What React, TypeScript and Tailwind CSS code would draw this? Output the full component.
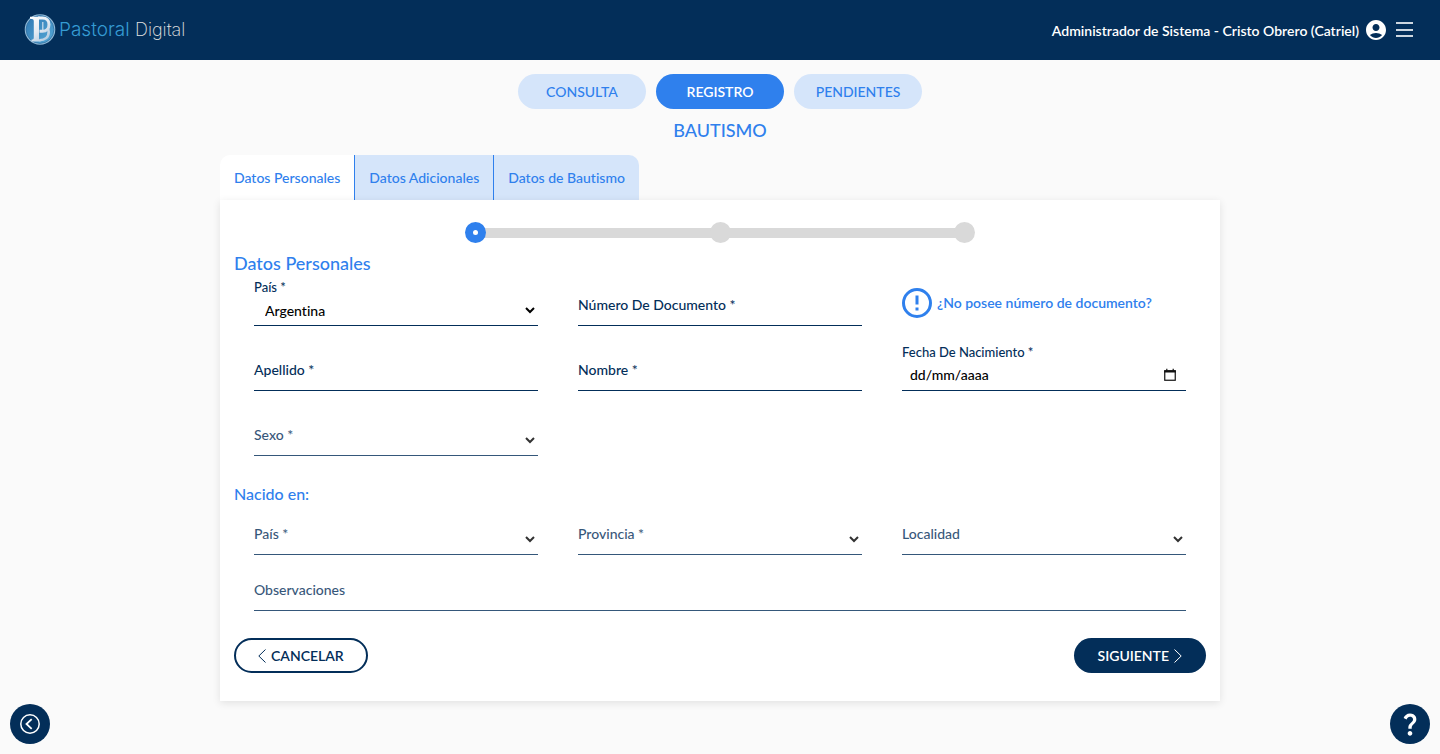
import React, { useState } from 'react';
import type { ReactNode } from 'react';
import { MdAccountCircle, MdQuestionMark } from 'react-icons/md';
import clsx from 'clsx';

const sections = ['CONSULTA', 'REGISTRO', 'PENDIENTES'];
const steps = ['Datos Personales', 'Datos Adicionales', 'Datos de Bautismo'];

interface FieldProps {
  id: string;
  label: string;
  floated?: boolean;
  faded?: boolean;
  className?: string;
  children: ReactNode;
}

const Field = ({ id, label, floated, faded, className, children }: FieldProps) => (
  <div className={clsx('relative h-[49px] border-b border-[#032e59] pt-5', faded && 'opacity-80', className)}>
    <label
      htmlFor={id}
      className={clsx(
        'pointer-events-none absolute left-0 leading-5 font-medium text-[#032e59]',
        floated ? 'top-0 text-[13px]' : 'top-[18px] text-sm'
      )}
    >
      {label}
    </label>
    {children}
  </div>
);

interface ControlProps {
  id: string;
  label: string;
  faded?: boolean;
  className?: string;
}

const TextField = ({ id, label, faded, className }: ControlProps) => {
  const [value, setValue] = useState('');

  return (
    <Field id={id} label={label} floated={value !== ''} faded={faded} className={className}>
      <input
        id={id}
        type="text"
        value={value}
        onChange={(e) => setValue(e.target.value)}
        className="h-[26px] w-full bg-transparent px-2 text-sm font-medium text-black outline-none"
      />
    </Field>
  );
};

const SelectField = ({ id, label, options, initial = '' }: ControlProps & { options: string[]; initial?: string }) => {
  const [value, setValue] = useState(initial);

  return (
    <Field id={id} label={label} floated={value !== ''} faded={value === ''}>
      <select
        id={id}
        value={value}
        onChange={(e) => setValue(e.target.value)}
        className="block h-[26px] w-full bg-transparent pl-[7px] text-sm font-medium text-black outline-none"
      >
        <option value="" />
        {options.map((option) => (
          <option key={option} value={option}>
            {option}
          </option>
        ))}
      </select>
    </Field>
  );
};

const DateField = ({ id, label }: ControlProps) => (
  <Field id={id} label={label} floated>
    <div className="flex h-[26px] items-center pr-[9px] pl-2">
      <input
        id={id}
        type="text"
        placeholder="dd/mm/aaaa"
        className="min-w-0 flex-1 bg-transparent text-sm font-medium text-black outline-none placeholder:text-black"
      />
      <button type="button" aria-label="Abrir calendario">
        <svg width="14" height="14" viewBox="0 0 14 14" fill="none" stroke="#111" className="block">
          <rect x="1.75" y="2.75" width="10.5" height="9.5" strokeWidth="1.2" />
          <path d="M1.2 3.500h11.6" strokeWidth="2" />
          <path d="M3.8.8v2M10.2.8v2" strokeWidth="1.2" />
        </svg>
      </button>
    </div>
  </Field>
);

const Logo = () => (
  <svg width="164" height="34" viewBox="0 0 164 34" role="img" aria-label="Pastoral Digital" className="block">
    <defs>
      <linearGradient id="disc" x1="0" y1="0" x2="1" y2="1">
        <stop offset="0" stopColor="#2f78b4" />
        <stop offset="1" stopColor="#56a9d6" />
      </linearGradient>
      <linearGradient id="letter" gradientUnits="userSpaceOnUse" x1="6" y1="4" x2="26" y2="28">
        <stop offset="0" stopColor="#ffffff" />
        <stop offset="0.5" stopColor="#e3eaf2" />
        <stop offset="1" stopColor="#a9c4dc" />
      </linearGradient>
    </defs>
    <circle cx="16" cy="16.5" r="15.3" fill="#8fb8d6" />
    <circle cx="16" cy="16.5" r="13.9" fill="url(#disc)" stroke="#2b6a9e" strokeWidth="0.7" />
    <path
      d="M6 3.800h10v2h-1V25.500c0 .8.500 1.200 1.500 1.200v1.800H7.500v-1.800c1.700 0 2.300-.7 2.300-2.200V8.200c0-1.700-1-2.400-3.800-2.400z"
      fill="url(#letter)"
    />
    <path
      d="M14 5h4.500c4.200 0 6.500 2.700 6.500 6.400s-2.300 6.900-6.500 6.900h-3"
      fill="none"
      stroke="url(#letter)"
      strokeWidth="3"
    />
    <path d="M15.500 27.300c5.500 0 9.200-3 9.200-8.300c0-1.800-.4-3.200-1.200-4.300" fill="none" stroke="url(#letter)" strokeWidth="2.600" />
    <path d="M18.800 9v8" fill="none" stroke="#cfe0ee" strokeWidth="1.200" />
    <text x="35" y="23" fontFamily="Inter, sans-serif" fontSize="19" fontWeight="300" fill="#359bd3">
      Pastoral
    </text>
    <text x="111" y="23" fontFamily="Inter, sans-serif" fontSize="18" fontWeight="200" fill="#e2e2e2">
      Digital
    </text>
  </svg>
);

const Header = () => (
  <header className="flex h-[60px] items-center justify-between bg-[#032e59] pr-[27px] pl-6 text-white">
    <a href="#inicio">
      <Logo />
    </a>
    <div className="flex items-center">
      <span className="pt-px text-sm font-semibold">Administrador de Sistema - Cristo Obrero (Catriel)</span>
      <button type="button" aria-label="Cuenta" className="ml-[5px]">
        <MdAccountCircle className="size-6" />
      </button>
      <button type="button" aria-label="Menú" className="ml-2">
        <svg width="17" height="16" viewBox="0 0 17 16" stroke="#cdd6df" strokeWidth="2" className="block">
          <path d="M0 1h17M0 8h17M0 14h17" />
        </svg>
      </button>
    </div>
  </header>
);

const Stepper = ({ current }: { current: number }) => (
  <div className="mx-auto flex w-[510px] max-w-full items-center">
    {steps.map((step, index) => (
      <React.Fragment key={step}>
        {index > 0 && <div className="-mx-0.5 h-2.5 flex-1 bg-[#d9d9d9]" />}
        <div
          className={clsx(
            'z-10 flex size-[21px] items-center justify-center rounded-full',
            index === current ? 'bg-[#2f80ed]' : 'bg-[#d9d9d9]'
          )}
        >
          {index === current && <span className="size-[5px] rounded-full bg-white" />}
        </div>
      </React.Fragment>
    ))}
  </div>
);

export default function App() {
  const [section, setSection] = useState('REGISTRO');
  const [step, setStep] = useState(0);

  return (
    <div className="min-h-screen bg-[#fafafa] font-['Lato',sans-serif] [font-variant-ligatures:none]">
      <Header />

      <main className="mx-auto max-w-[1000px] pb-[53px]">
        <nav className="flex justify-center gap-2.5 pt-3.5">
          {sections.map((name) => (
            <button
              key={name}
              type="button"
              onClick={() => setSection(name)}
              className={clsx(
                'h-[35px] w-32 rounded-full text-sm',
                section === name ? 'bg-[#2f80ed] font-semibold text-white' : 'bg-[#d5e5fa] font-medium text-[#2f80ed]'
              )}
            >
              {name}
            </button>
          ))}
        </nav>
        <h1 className="mt-[7px] text-center text-lg leading-7 font-medium text-[#2f80ed]">BAUTISMO</h1>

        {/* Tabs */}
        <div className="mt-[11px] flex">
          <div className="flex overflow-hidden rounded-t-[10px]">
            {steps.map((name, index) => (
              <button
                key={name}
                type="button"
                onClick={() => setStep(index)}
                className={clsx(
                  'h-[45px] px-3.5 text-sm font-medium text-[#2f80ed]',
                  index > 0 && 'border-l border-[#2f80ed]',
                  step === index ? 'bg-white' : 'bg-[#d5e5fa]'
                )}
              >
                {name}
              </button>
            ))}
          </div>
        </div>

        <form
          onSubmit={(e) => e.preventDefault()}
          className="relative bg-white px-3.5 pt-[22px] pb-7 shadow-[0_2px_8px_rgba(0,0,0,0.1)]"
        >
          <Stepper current={step} />
          <h2 className="mt-1.5 text-lg leading-7 font-medium text-[#2f80ed]">Datos Personales</h2>
          <div className="grid grid-cols-3 gap-x-10 gap-y-4 px-5">
            <SelectField
              id="pais"
              label="País *"
              initial="Argentina"
              options={['Argentina', 'Bolivia', 'Chile', 'Paraguay', 'Uruguay']}
            />
            <TextField id="documento" label="Número De Documento *" />
            <button type="button" className="flex items-center gap-[5px] pt-0.5 text-sm font-semibold text-[#2f80ed]">
              <svg width="30" height="30" viewBox="2 2 20 20" fill="currentColor">
                <path d="M11 15h2v2h-2zm0-8h2v6h-2zm1-5a10 10 0 1 0 0 20 10 10 0 0 0 0-20zm0 18a8 8 0 1 1 0-16 8 8 0 0 1 0 16z" />
              </svg>
              ¿No posee número de documento?
            </button>
            <TextField id="apellido" label="Apellido *" />
            <TextField id="nombre" label="Nombre *" />
            <DateField id="nacimiento" label="Fecha De Nacimiento *" />
            <SelectField id="sexo" label="Sexo *" options={['Femenino', 'Masculino']} />
          </div>

          <h3 className="mt-[26px] text-base leading-6 font-medium text-[#2f80ed]">Nacido en:</h3>
          <div className="grid grid-cols-3 gap-x-10 gap-y-[7px] px-5">
            <SelectField id="pais-nacimiento" label="País *" options={['Argentina', 'Bolivia', 'Chile']} />
            <SelectField id="provincia" label="Provincia *" options={['Buenos Aires', 'Neuquén', 'Río Negro']} />
            <SelectField id="localidad" label="Localidad" options={['Catriel', 'Cipolletti', 'General Roca']} />
            <TextField id="observaciones" label="Observaciones" faded className="col-span-3" />
          </div>

          <div className="mt-[27px] flex justify-between">
            <button
              type="button"
              className="flex h-[35px] items-center gap-[5px] rounded-full border-2 border-[#032e59] px-[22px] text-sm font-semibold text-[#032e59]"
            >
              <svg width="8" height="14" viewBox="0 0 8 14" fill="none" stroke="currentColor">
                <path d="M7.500.5.800 7l6.700 6.500" />
              </svg>
              CANCELAR
            </button>
            <button
              type="submit"
              className="flex h-[35px] items-center gap-[5px] rounded-full bg-[#032e59] px-6 text-sm font-semibold text-white"
            >
              SIGUIENTE
              <svg width="8" height="14" viewBox="0 0 8 14" fill="none" stroke="currentColor">
                <path d="M.5.500 7.200 7 .5 13.500" />
              </svg>
            </button>
          </div>
        </form>
      </main>

      <button
        type="button"
        aria-label="Volver"
        className="fixed bottom-2.5 left-2.5 flex size-10 items-center justify-center rounded-full bg-[#032e59] text-white"
      >
        <svg width="20" height="20" viewBox="0 0 20 20" fill="none" stroke="currentColor" strokeWidth="1.500">
          <circle cx="10" cy="10" r="9.200" />
          <path d="M11.700 5.200 6.500 10l5.200 4.800" strokeWidth="1.800" />
        </svg>
      </button>
      <button
        type="button"
        aria-label="Ayuda"
        className="fixed right-2.5 bottom-2.5 flex size-10 items-center justify-center rounded-full bg-[#032e59] text-white"
      >
        <MdQuestionMark className="size-7" />
      </button>
    </div>
  );
}
